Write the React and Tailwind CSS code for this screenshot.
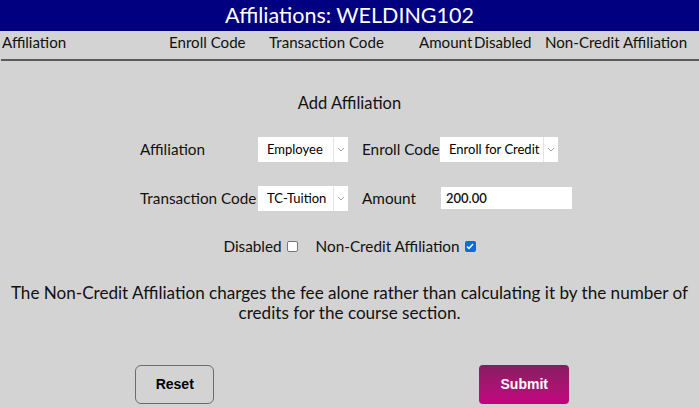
import React from "react";

const font = { fontFamily: '"Lato", "Noto Sans", sans-serif' };

function Chevron() {
  return (
    <svg width="8" height="5" viewBox="0 0 8 5" fill="none">
      <path d="M1 1 L4 4 L7 1" stroke="#a0a0a0" strokeWidth="1" />
    </svg>
  );
}

function Select({ value, w }) {
  return (
    <div className={`flex h-[25px] bg-white ${w}`}>
      <div className="flex-1 flex items-center pl-[9px] text-[13px] text-black">{value}</div>
      <div className="w-[15px] border-l border-[#e4e4e4] flex items-center justify-center">
        <Chevron />
      </div>
    </div>
  );
}

export default function App() {
  return (
    <div className="w-[699px] h-[408px] bg-[#d3d3d3] text-[#111] overflow-hidden" style={font}>
      <div className="h-[31px] bg-[#000080] flex items-center justify-center text-white text-[21.5px] leading-none pt-[1px]">
        Affiliations: WELDING102
      </div>
      <div className="flex pl-[2px] text-[15.1px] h-[22px] items-center">
        <div className="w-[167px]">Affiliation</div>
        <div className="w-[100px]">Enroll Code</div>
        <div className="w-[150px]">Transaction Code</div>
        <div className="w-[55px]">Amount</div>
        <div className="w-[71px]">Disabled</div>
        <div className="whitespace-nowrap">Non-Credit Affiliation</div>
      </div>
      <div className="h-[2px] bg-[#5a5a5a] ml-[1px] mt-[6px]" />
      <div className="text-center text-[16.5px] mt-[30px]">Add Affiliation</div>
      <div className="ml-[140px] mt-[21px] grid grid-cols-[118px_104px_78px_auto] gap-y-[24px] items-center text-[15.3px]">
        <div className="whitespace-nowrap">Affiliation</div>
        <Select value="Employee" w="w-[90px]" />
        <div className="whitespace-nowrap">Enroll Code</div>
        <Select value="Enroll for Credit" w="w-[118px]" />
        <div className="whitespace-nowrap">Transaction Code</div>
        <Select value="TC-Tuition" w="w-[90px]" />
        <div>Amount</div>
        <div className="ml-[1px] w-[131px] h-[22px] bg-white flex items-center pl-[5px] text-[13px] font-semibold">200.00</div>
      </div>
      <div className="flex justify-center items-center mt-[24px] text-[15.3px]">
        <span>Disabled</span>
        <span className="ml-[5px] w-[11px] h-[11px] bg-white border border-[#767676] rounded-[2px]" />
        <span className="ml-[18px]">Non-Credit Affiliation</span>
        <span className="ml-[5px] w-[11px] h-[11px] bg-[#0b6cd6] rounded-[2px] flex items-center justify-center">
          <svg width="8" height="7" viewBox="0 0 8 7"><path d="M1 3.5 L3 5.5 L7 1" stroke="white" strokeWidth="1.5" fill="none" /></svg>
        </span>
      </div>
      <div className="text-center text-[17.1px] leading-[20px] mt-[25px] whitespace-nowrap">
        The Non-Credit Affiliation charges the fee alone rather than calculating it by the number of
        <br />
        credits for the course section.
      </div>
      <div className="grid grid-cols-2 mt-[42px]">
        <div className="flex justify-center">
          <button className="w-[79px] h-[39px] border border-[#6b6b6b] rounded-[6px] text-[14px] font-bold text-black" style={{ fontFamily: '"Liberation Sans", Arial, sans-serif' }}>
            Reset
          </button>
        </div>
        <div className="flex justify-center">
          <button className="w-[90px] h-[39px] rounded-[4px] text-[14px] font-bold text-white bg-gradient-to-b from-[#861c63] to-[#c4007f]" style={{ fontFamily: '"Liberation Sans", Arial, sans-serif' }}>
            Submit
          </button>
        </div>
      </div>
    </div>
  );
}
